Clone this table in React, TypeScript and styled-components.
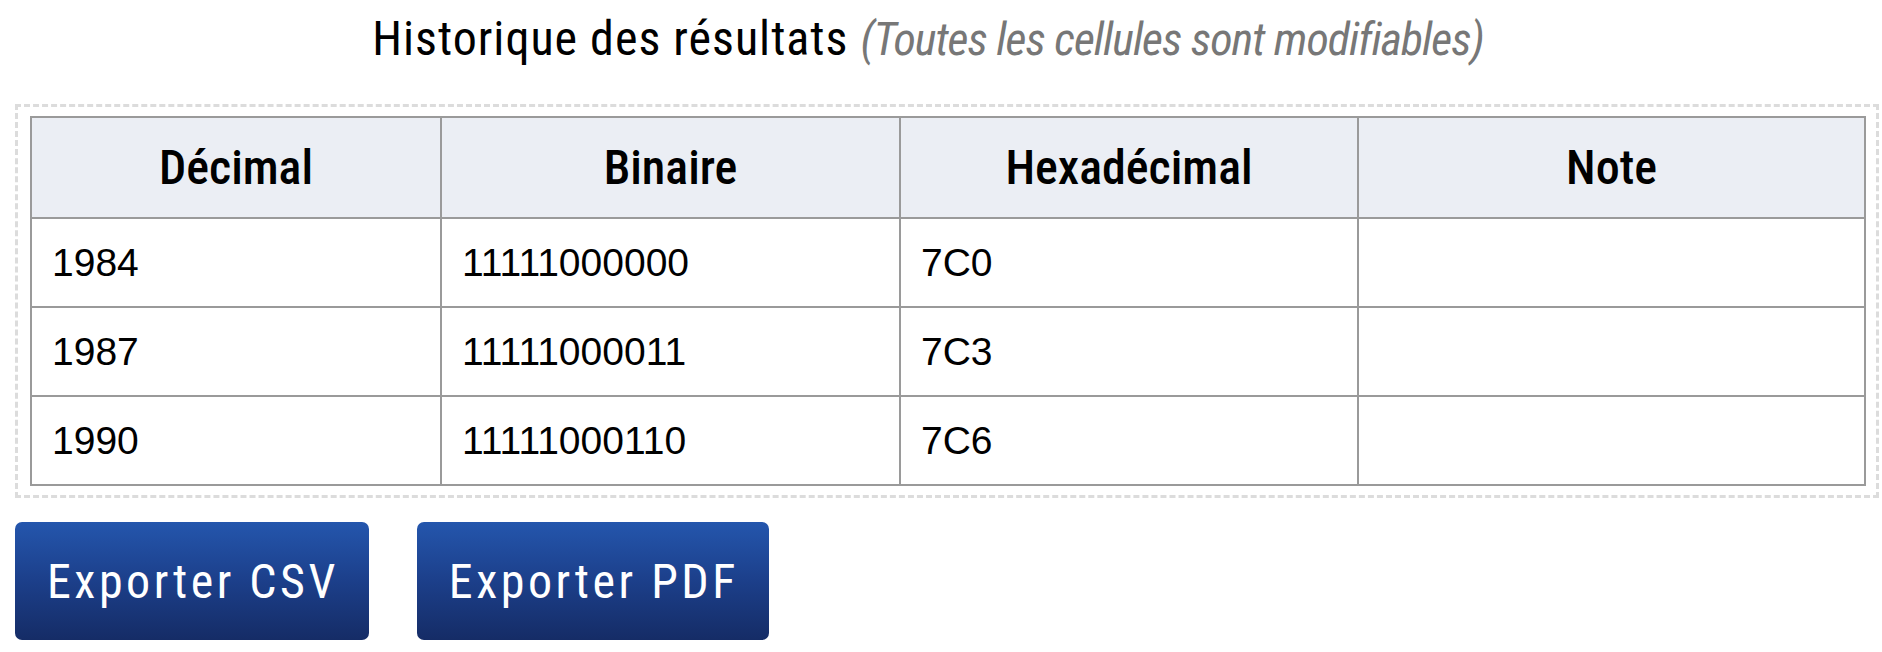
import React from "react";
import styled, { createGlobalStyle } from "styled-components";

const GlobalStyle = createGlobalStyle`
  html, body {
    margin: 0;
    padding: 0;
    background: #ffffff;
  }
  body {
    font-family: "Liberation Sans", Arial, sans-serif;
  }
`;

const condensed = `
  font-family: "Roboto", "Open Sans", sans-serif;
  font-stretch: 75%;
`;

const Page = styled.div`
  padding: 0 3px 0 15px;
  display: flex;
  flex-direction: column;
`;

const Title = styled.h2`
  margin: 15px 0 41px;
  ${condensed}
  font-weight: 400;
  font-size: 48px;
  line-height: 48px;
  letter-spacing: 1px;
  color: #000;
  text-align: center;
  padding-right: 38px;
`;

const Hint = styled.span`
  margin-left: 12px;
  font-style: italic;
  font-size: 46px;
  color: #777;
  letter-spacing: -1px;
`;

const Frame = styled.div`
  border: 3px dashed #dcdcdc;
  padding: 9px 12px 9px 12px;
`;

const Table = styled.table`
  width: 100%;
  table-layout: fixed;
  border-collapse: collapse;
  border: 2px solid #9a9a9a;
`;

const HeadCell = styled.th`
  height: 99px;
  padding: 0 10px;
  background: #ebeef4;
  border: 2px solid #9a9a9a;
  ${condensed}
  font-weight: 500;
  font-size: 48px;
  letter-spacing: 0;
  color: #000;
  text-align: center;
  vertical-align: middle;
`;

const Cell = styled.td`
  height: 87px;
  padding: 0 20px;
  border: 2px solid #9a9a9a;
  font-family: "Liberation Sans", Arial, sans-serif;
  font-size: 39px;
  color: #000;
  text-align: left;
  vertical-align: middle;
  outline: none;
`;

const Actions = styled.div`
  display: flex;
  gap: 48px;
  margin-top: 24px;
`;

const ExportButton = styled.button`
  height: 118px;
  padding: 0 30px 0 32px;
  border: none;
  border-radius: 7px;
  background: linear-gradient(to bottom, #2456ad 0%, #1c3f8a 50%, #152c66 100%);
  color: #ffffff;
  ${condensed}
  font-size: 48px;
  letter-spacing: 3.5px;
  cursor: pointer;
`;

const columns = [
  { label: "Décimal", width: 410 },
  { label: "Binaire", width: 459 },
  { label: "Hexadécimal", width: 458 },
  { label: "Note", width: 507 },
];

const rows = [
  ["1984", "11111000000", "7C0", ""],
  ["1987", "11111000011", "7C3", ""],
  ["1990", "11111000110", "7C6", ""],
];

export default function App() {
  return (
    <>
      <GlobalStyle />
      <Page>
        <Title>
          Historique des résultats
          <Hint>(Toutes les cellules sont modifiables)</Hint>
        </Title>
        <Frame>
          <Table>
            <colgroup>
              {columns.map((c) => (
                <col key={c.label} style={{ width: c.width }} />
              ))}
            </colgroup>
            <thead>
              <tr>
                {columns.map((c) => (
                  <HeadCell key={c.label}>{c.label}</HeadCell>
                ))}
              </tr>
            </thead>
            <tbody>
              {rows.map((r, i) => (
                <tr key={i}>
                  {r.map((v, j) => (
                    <Cell key={j} contentEditable suppressContentEditableWarning>
                      {v}
                    </Cell>
                  ))}
                </tr>
              ))}
            </tbody>
          </Table>
        </Frame>
        <Actions>
          <ExportButton>Exporter CSV</ExportButton>
          <ExportButton>Exporter PDF</ExportButton>
        </Actions>
      </Page>
    </>
  );
}
